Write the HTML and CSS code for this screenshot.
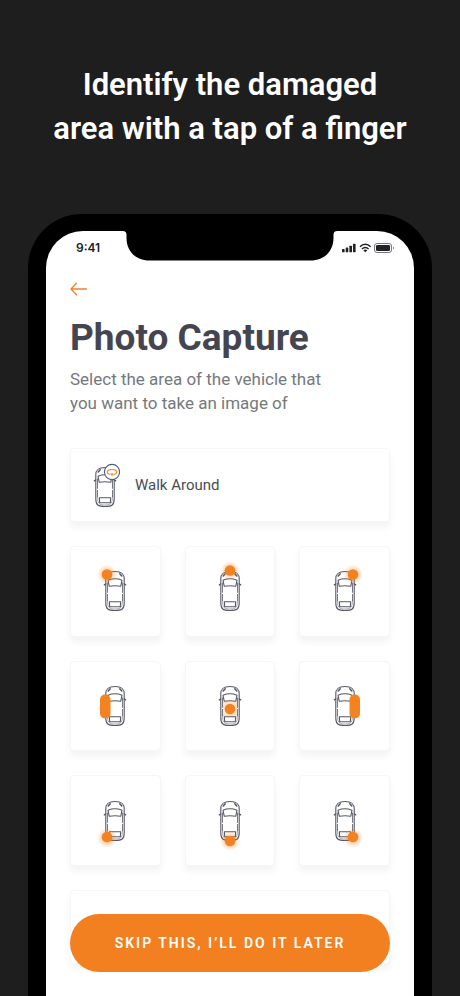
FILE: index.html
```html
<!DOCTYPE html>
<html lang="en">
<head>
<meta charset="utf-8">
<meta name="viewport" content="width=device-width, initial-scale=1">
<title>Photo Capture</title>
<link rel="stylesheet" href="styles.css">
</head>
<body>
<svg class="defs" aria-hidden="true">
  <defs>
    <radialGradient id="glow">
      <stop offset="0.4" stop-color="#f58220" stop-opacity="0.4"/>
      <stop offset="1" stop-color="#f58220" stop-opacity="0"/>
    </radialGradient>
    <symbol id="car" viewBox="-30 -30 60 60">
      <g fill="none" stroke="#555764" stroke-width="1.1" stroke-linecap="round" stroke-linejoin="round">
        <path d="M-9.200-7V-12C-9.200-17.500-6.500-19.500 0-19.500S9.200-17.500 9.200-12V12C9.200 18 7 19.500 0 19.500S-9.200 18-9.200 12Z"/>
        <path d="M-7.500 9C-7.500 16-6.500 18 0 18S7.500 16 7.500 9" stroke-width=".5"/>
        <path d="M-7-10.800C-3-12.400 3-12.400 7-10.800L5.800-4.800C2-5.300-2-5.300-5.800-4.800Z"/>
        <path d="M-5.700 10.700H5.700L5.300 15.800H-5.300Z"/>
        <path d="M-7.500-8V1.400M-7.500 3.400V9.500M7.500-8V1.400M7.500 3.400V9.500" stroke-width=".8"/>
        <path d="M-9.400-7-10.600-6.200M9.400-7 10.600-6.200" stroke-width="1.500"/>
        <path d="M-6.800-15-4.800-17.200M6.800-15 4.800-17.200" stroke-width="1.600"/>
      </g>
    </symbol>
  </defs>
</svg>

<h2 class="headline">Identify the damaged<br>area with a tap of a finger</h2>

<div class="phone">
  <div class="screen">
    <svg class="notch" width="215" height="30" viewBox="0 0 215 30" aria-hidden="true">
      <path d="M0 0C3 0 4 1.500 4 4V7C4 20 13 29.500 27 29.500H188C202 29.500 211 20 211 7V4C211 1.500 212 0 215 0Z"/>
    </svg>
    <header class="status">
      <span class="time">9:41</span>
      <svg width="52" height="12" viewBox="0 0 52 12" role="img" aria-label="Signal, Wi-Fi, battery">
        <g fill="#222226">
          <rect x="0" y="7" width="2.600" height="3.300" rx=".6"/>
          <rect x="3.700" y="5.500" width="2.600" height="4.800" rx=".6"/>
          <rect x="7.400" y="3.700" width="2.600" height="6.600" rx=".6"/>
          <rect x="11" y="1.800" width="2.600" height="8.500" rx=".6"/>
          <path d="M21.300 8.200Q23.300 6.800 25.300 8.200L23.300 10.300Z"/>
          <rect x="34" y="3" width="14" height="6" rx="1.200"/>
          <path d="M51 4.500Q52.300 6 51 7.500Z"/>
        </g>
        <path d="M18 4.800C21 1.500 25.600 1.500 28.600 4.800M20 7C22 5 24.600 5 26.600 7" fill="none" stroke="#222226" stroke-width="1.500"/>
        <rect x="32.500" y="1.500" width="17" height="9" rx="2.500" fill="none" stroke="#77777b"/>
      </svg>
    </header>

    <main class="content">
      <a class="back" href="#" aria-label="Back">
        <svg width="18" height="14" viewBox="0 0 18 14" fill="none" stroke="#f08030" stroke-width="1.300" stroke-linecap="round" stroke-linejoin="round"><path d="M16.500 7H1M6.500 1.200 1 7 6.500 12.800"/></svg>
      </a>
      <h1 class="title">Photo Capture</h1>
      <p class="lead">Select the area of the vehicle that<br>you want to take an image of</p>

      <button class="card wide" type="button">
        <svg width="60" height="60" viewBox="-30 -30 60 60" aria-hidden="true">
          <use href="#car" x="-30" y="-28" width="60" height="60"/>
          <circle cx="7" cy="-13" r="7.600" fill="#fff" stroke="#4f5c7a" stroke-width="1.100"/>
          <path d="M5-10.500C.5-11.800 1.500-15.500 7-15.500S13.500-11.800 9-10.500" fill="none" stroke="#f58220" stroke-width="1.100"/>
          <path d="M5-11.500H9L7-9Z" fill="#f58220"/>
        </svg>
        <span>Walk Around</span>
      </button>

      <div class="grid">
        <button class="card" type="button" aria-label="Front left">
          <svg width="60" height="60" viewBox="-30 -30 60 60"><use href="#car" x="-30" y="-30" width="60" height="60"/><circle cx="-8" cy="-16.500" r="10" fill="url(#glow)"/><circle cx="-8" cy="-16.500" r="5.300" fill="#f58220"/></svg>
        </button>
        <button class="card" type="button" aria-label="Front">
          <svg width="60" height="60" viewBox="-30 -30 60 60"><use href="#car" x="-30" y="-30" width="60" height="60"/><circle cy="-20.500" r="9.500" fill="url(#glow)"/><circle cy="-20.500" r="5.300" fill="#f58220"/></svg>
        </button>
        <button class="card" type="button" aria-label="Front right">
          <svg width="60" height="60" viewBox="-30 -30 60 60"><use href="#car" x="-30" y="-30" width="60" height="60"/><circle cx="8" cy="-16.500" r="10" fill="url(#glow)"/><circle cx="8" cy="-16.500" r="5.300" fill="#f58220"/></svg>
        </button>
        <button class="card" type="button" aria-label="Left side">
          <svg width="60" height="60" viewBox="-30 -30 60 60"><use href="#car" x="-30" y="-30" width="60" height="60"/><rect x="-15" y="-11.500" width="10.500" height="24" rx="5" fill="#f58220"/></svg>
        </button>
        <button class="card" type="button" aria-label="Roof">
          <svg width="60" height="60" viewBox="-30 -30 60 60"><rect x="-7" y="-4.500" width="14" height="15" fill="#fde3cb"/><use href="#car" x="-30" y="-30" width="60" height="60"/><circle cy="3" r="5.300" fill="#f58220"/></svg>
        </button>
        <button class="card" type="button" aria-label="Right side">
          <svg width="60" height="60" viewBox="-30 -30 60 60"><use href="#car" x="-30" y="-30" width="60" height="60"/><rect x="4.500" y="-11.500" width="10.500" height="24" rx="5" fill="#f58220"/></svg>
        </button>
        <button class="card" type="button" aria-label="Rear left">
          <svg width="60" height="60" viewBox="-30 -30 60 60"><use href="#car" x="-30" y="-30" width="60" height="60"/><circle cx="-8" cy="17" r="10" fill="url(#glow)"/><circle cx="-8" cy="16" r="5.300" fill="#f58220"/></svg>
        </button>
        <button class="card" type="button" aria-label="Rear">
          <svg width="60" height="60" viewBox="-30 -30 60 60"><use href="#car" x="-30" y="-30" width="60" height="60"/><circle cy="20" r="10" fill="url(#glow)"/><circle cy="20" r="5.300" fill="#f58220"/></svg>
        </button>
        <button class="card" type="button" aria-label="Rear right">
          <svg width="60" height="60" viewBox="-30 -30 60 60"><use href="#car" x="-30" y="-30" width="60" height="60"/><circle cx="8" cy="17" r="10" fill="url(#glow)"/><circle cx="8" cy="16" r="5.300" fill="#f58220"/></svg>
        </button>
      </div>

      <div class="card wide"></div>
    </main>

    <button class="skip" type="button">SKIP THIS, I’LL DO IT LATER</button>
  </div>
</div>
</body>
</html>
```
FILE: styles.css
```css
* {
  box-sizing: border-box;
}

body {
  display: flex;
  flex-direction: column;
  height: 100vh;
  margin: 0;
  overflow: hidden;
  background: #1e1e1e;
  font-family: Roboto, "Liberation Sans", sans-serif;
}

svg {
  display: block;
}

.defs {
  position: absolute;
  width: 0;
  height: 0;
}

.headline {
  flex: none;
  margin: 0;
  padding: 63px 16px;
  color: #fff;
  font-size: 31px;
  font-weight: 600;
  line-height: 44px;
  text-align: center;
}

.phone {
  flex: 1;
  display: flex;
  min-height: 0;
  margin: 0 28px;
  padding: 17px 18px 0;
  border-radius: 54px 54px 0 0;
  background: #000;
}

.screen {
  position: relative;
  flex: 1;
  overflow: hidden;
  border-radius: 37px 37px 0 0;
  background: #fff;
}

.notch {
  position: absolute;
  top: 0;
  left: 50%;
  transform: translateX(-50%);
}

.status {
  display: flex;
  align-items: center;
  justify-content: space-between;
  height: 33px;
  padding: 0 20px 0 30px;
}

.time {
  color: #222226;
  font-family: Inter, sans-serif;
  font-size: 12px;
  font-weight: 600;
  line-height: 15px;
}

.content {
  display: flex;
  flex-direction: column;
  padding: 18px 24px 0;
}

.back {
  align-self: flex-start;
}

.title {
  margin: 20px 0 0;
  color: #454552;
  font-size: 37px;
  font-weight: 700;
  line-height: 44px;
}

.lead {
  margin: 7px 0 33px;
  color: #74797d;
  font-size: 17px;
  line-height: 24px;
}

.card {
  display: flex;
  align-items: center;
  justify-content: center;
  padding: 0;
  border: 1px solid #f6f6f6;
  border-radius: 4px;
  background: #fff;
  box-shadow: 0 5px 7px rgba(0, 0, 0, 0.05);
}

.wide {
  flex: none;
  justify-content: flex-start;
  height: 74px;
  padding: 0 4px;
  color: #4a4d52;
  font: 15px/24px Roboto, "Liberation Sans", sans-serif;
}

.grid {
  display: grid;
  grid-template-columns: repeat(3, 1fr);
  gap: 24px;
  margin: 24px 0;
}

.grid .card {
  aspect-ratio: 1;
}

.skip {
  position: absolute;
  right: 24px;
  bottom: 24px;
  left: 24px;
  height: 58px;
  padding: 0;
  border: 0;
  border-radius: 29px;
  background: #f38020;
  color: #fff;
  font: 600 14px/24px Roboto, "Liberation Sans", sans-serif;
  letter-spacing: 2px;
}
```
